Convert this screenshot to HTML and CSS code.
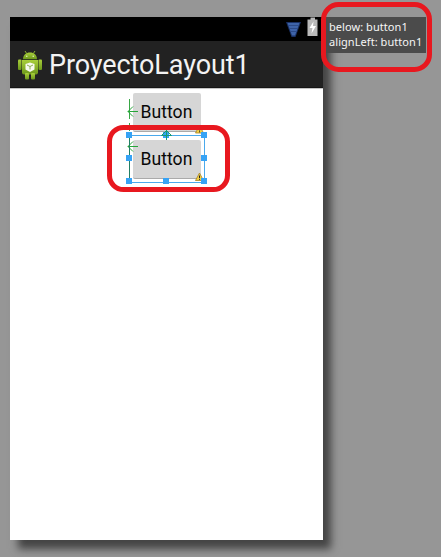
FILE: index.html
```html
<!DOCTYPE html>
<html lang="es">
<head>
<meta charset="utf-8">
<title>ProyectoLayout1</title>
<link rel="stylesheet" href="styles.css">
</head>
<body>
<main class="device">
  <div class="status">
    <svg width="36" height="24" viewBox="0 0 36 24">
      <path d="M0 5h15L9.500 20h-4z" fill="#193064"/>
      <path d="M1.500 6h12L9 18.500H6z" fill="#3e63a8"/>
      <path d="M2 8.500h11M3 11.500h9M4 14.500h7" stroke="#2c4a88"/>
      <path d="M21.500 2.500h3V.500h4.500v2h2.500V19h-10z" fill="#b9b9b9"/>
      <path d="M27.500 4.500l-4 6.500h3l-1 5.500 4.500-7.500h-3z" fill="#fff"/>
    </svg>
  </div>
  <header class="bar">
    <svg class="robot" width="26" height="30" viewBox="0 0 26 30">
      <defs><linearGradient id="g" x2="0" y2="1"><stop stop-color="#a9cf3b"/><stop offset="1" stop-color="#6c971b"/></linearGradient></defs>
      <g fill="url(#g)">
        <path d="M6 9.300C6 5 9 2.500 13 2.500S20 5 20 9.300z"/>
        <path d="M5 10h16v12.500q0 2-2 2H7q-2 0-2-2z"/>
        <rect x="1" y="9.500" width="3.500" height="10.500" rx="1"/>
        <rect x="21.500" y="9.500" width="3.500" height="10.500" rx="1"/>
        <rect x="8" y="23" width="4" height="6.500" rx="1"/>
        <rect x="14" y="23" width="4" height="6.500" rx="1"/>
      </g>
      <path d="M8 1l2 3M18 1l-2 3" stroke="#8db32d"/>
      <circle cx="9.800" cy="6.300" r=".7" fill="#eef5d5"/><circle cx="16.200" cy="6.300" r=".7" fill="#eef5d5"/>
      <path d="M13 12.500l4.500 1.500v5.500L13 22l-4.500-2.500V14z" fill="#f8faef"/>
      <path d="M10 15l3 1.500 3-1.500M13 16.500v3" stroke="#82a646" stroke-width=".9" fill="none"/>
    </svg>
    <h1>ProyectoLayout1</h1>
  </header>
  <div class="canvas">
    <div class="button">Button</div>
    <div class="button">Button</div>
  </div>
</main>
<aside class="tip">below: button1<br>alignLeft: button1</aside>
<svg class="overlay" width="441" height="557" viewBox="0 0 441 557">
  <defs>
    <g id="warn"><path d="M4.500.500L8.500 8h-8z" fill="#f2cf45" stroke="#a58226" stroke-width=".8"/><path d="M4.500 3v2.500M4.500 6.300v1" stroke="#222"/></g>
  </defs>
  <use href="#warn" x="195" y="125"/>
  <use href="#warn" x="195" y="172.500"/>
  <path d="M129.500 99v20M129.500 123v8" stroke="#38a745"/>
  <g stroke="#26a639" fill="none">
    <path d="M128 111.500h10M133 106.500l-5 5 5 5M128 146.500h10M133 141.500l-5 5 5 5"/>
  </g>
  <path d="M129.500 135.500h75v47h-75z" fill="none" stroke="#4aa9ec"/>
  <path d="M129.500 136v45" stroke="#218065"/>
  <g fill="#36a3f5">
    <path d="M126 132h6v6h-6zM163 132h6v6h-6zM201 132h6v6h-6zM126 155h6v6h-6zM201 155h6v6h-6zM126 178h6v6h-6zM163 178h6v6h-6zM201 178h6v6h-6z"/>
  </g>
  <path d="M166.500 130v10M161.500 135.500l5-5 5 5z" stroke="#159b72" fill="none"/>
  <g fill="none" stroke="#e8181f" stroke-width="5">
    <rect x="109.500" y="127.500" width="118" height="62" rx="14"/>
    <rect x="323.500" y="4.500" width="106" height="65" rx="15"/>
  </g>
</svg>
</body>
</html>
```
FILE: styles.css
```css
body {
  margin: 0;
  width: 441px;
  height: 557px;
  box-sizing: border-box;
  padding: 17px 0 0 10px;
  overflow: hidden;
  background: #969696;
  font-family: Roboto, sans-serif;
}
.device {
  width: 313px;
  height: 523px;
  background: #fff;
  box-shadow: 8px 9px 8px #444;
}
.status {
  height: 24px;
  background: #000;
  display: flex;
  justify-content: flex-end;
  box-sizing: border-box;
  padding-right: 1px;
}
.bar {
  height: 47px;
  box-sizing: border-box;
  background: #222;
  border-bottom: 1px solid #161616;
  box-shadow: 0 1px 0 #c5c5c5;
  display: flex;
  align-items: center;
  padding-left: 7px;
}
.robot { margin-top: 2px; }
h1 {
  margin: 2px 0 0 6px;
  color: #f3f3f3;
  font-size: 27px;
  line-height: 46px;
  font-weight: 400;
  letter-spacing: -.1px;
}
.canvas {
  display: flex;
  flex-direction: column;
  gap: 8px;
  padding: 5px 0 0 122.5px;
}
.button {
  width: 68px;
  height: 39px;
  box-sizing: border-box;
  border-bottom: 1px solid #aaa;
  border-radius: 2px;
  background: #d6d6d6;
  color: #080808;
  font-size: 17.6px;
  line-height: 38px;
  text-align: center;
}
.tip {
  position: absolute;
  left: 326px;
  top: 17px;
  width: 100px;
  height: 36px;
  box-sizing: border-box;
  padding: 2px 0 0 3px;
  background: #4b4b4b;
  color: #f6f6f6;
  font: 11px/15px "Noto Sans", sans-serif;
  letter-spacing: .06px;
  white-space: nowrap;
}
.overlay {
  position: absolute;
  left: 0;
  top: 0;
}
```
